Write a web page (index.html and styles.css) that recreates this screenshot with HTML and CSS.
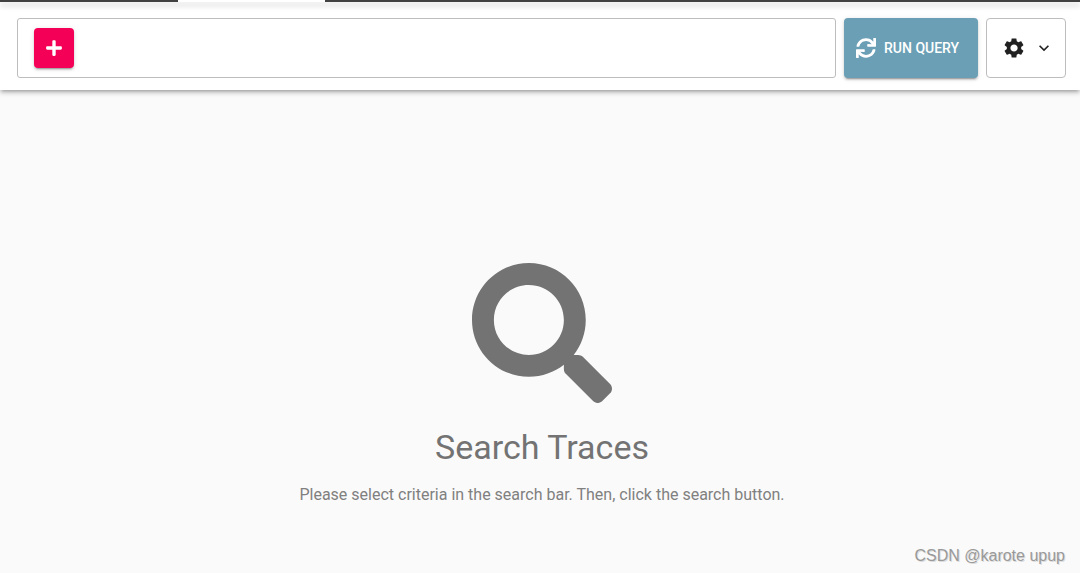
FILE: index.html
```
<!DOCTYPE html>
<html lang="en">

<head>
    <meta charset="utf-8">
    <title>Search Traces</title>
    <link rel="stylesheet" href="styles.css">
</head>

<body>
    <div class="tabStrip"><div class="activeTab"></div></div>
    <header class="toolbar">
        <div class="searchBar">
            <button class="addButton" aria-label="Add criterion">
                <svg width="16" height="18" viewBox="0 0 448 512"><path d="M416 208H272V64c0-17.67-14.33-32-32-32h-32c-17.67 0-32 14.33-32 32v144H32c-17.67 0-32 14.33-32 32v32c0 17.67 14.33 32 32 32h144v144c0 17.67 14.33 32 32 32h32c17.67 0 32-14.33 32-32V304h144c17.67 0 32-14.33 32-32v-32c0-17.67-14.33-32-32-32z"/></svg>
            </button>
        </div>
        <button class="runButton">
            <svg width="20" height="20" viewBox="0 0 512 512"><path d="M440.65 12.57l4 82.77A247.16 247.16 0 0 0 255.83 8C134.73 8 33.91 94.92 12.29 209.82A12 12 0 0 0 24.09 224h49.05a12 12 0 0 0 11.67-9.26 175.91 175.91 0 0 1 317-56.94l-101.46-4.86a12 12 0 0 0-12.57 12v47.41a12 12 0 0 0 12 12H500a12 12 0 0 0 12-12V12a12 12 0 0 0-12-12h-47.37a12 12 0 0 0-11.98 12.57zM255.83 432a175.61 175.61 0 0 1-146-77.8l101.8 4.87a12 12 0 0 0 12.57-12v-47.4a12 12 0 0 0-12-12H12a12 12 0 0 0-12 12V500a12 12 0 0 0 12 12h47.35a12 12 0 0 0 12-12.6l-4.15-82.57A247.17 247.17 0 0 0 255.83 504c121.11 0 221.93-86.92 243.55-201.82a12 12 0 0 0-11.8-14.18h-49.05a12 12 0 0 0-11.67 9.26A175.86 175.86 0 0 1 255.83 432z"/></svg>
            <span>RUN QUERY</span>
        </button>
        <button class="settingsButton" aria-label="Settings">
            <svg width="24" height="24" viewBox="0 0 24 24"><path d="M19.14 12.94c.04-.3.06-.61.06-.94 0-.32-.02-.64-.07-.94l2.03-1.58c.18-.14.23-.41.12-.61l-1.92-3.32c-.12-.22-.37-.29-.59-.22l-2.39.96c-.5-.38-1.03-.7-1.62-.94l-.36-2.54c-.04-.24-.24-.41-.48-.41h-3.84c-.24 0-.43.17-.47.41l-.36 2.54c-.59.24-1.13.57-1.62.94l-2.39-.96c-.22-.08-.47 0-.59.22L2.74 8.87c-.12.21-.08.47.12.61l2.03 1.58c-.05.3-.09.63-.09.94s.02.64.07.94l-2.03 1.58c-.18.14-.23.41-.12.61l1.92 3.32c.12.22.37.29.59.22l2.39-.96c.5.38 1.03.7 1.62.94l.36 2.54c.05.24.24.41.48.41h3.84c.24 0 .44-.17.47-.41l.36-2.54c.59-.24 1.13-.56 1.62-.94l2.39.96c.22.08.47 0 .59-.22l1.92-3.32c.12-.22.07-.47-.12-.61l-2.01-1.58zM12 15.6c-1.98 0-3.6-1.62-3.6-3.6s1.62-3.6 3.6-3.6 3.6 1.62 3.6 3.6-1.62 3.6-3.6 3.6z"/></svg>
            <svg width="20" height="20" viewBox="0 0 24 24"><path d="M7.41 8.59L12 13.17l4.59-4.58L18 10l-6 6-6-6 1.41-1.41z"/></svg>
        </button>
    </header>
    <main class="content">
        <svg width="140" height="140" viewBox="0 0 512 512"><path d="M505 442.7L405.3 343c-4.5-4.5-10.6-7-17-7H372c27.6-35.3 44-79.7 44-128C416 93.1 322.9 0 208 0S0 93.1 0 208s93.1 208 208 208c48.3 0 92.7-16.4 128-44v16.3c0 6.4 2.5 12.5 7 17l99.7 99.7c9.4 9.4 24.6 9.4 33.9 0l28.3-28.3c9.4-9.4 9.4-24.6.1-34zM208 336c-70.7 0-128-57.2-128-128 0-70.7 57.2-128 128-128 70.7 0 128 57.2 128 128 0 70.7-57.2 128-128 128z"/></svg>
        <h1>Search Traces</h1>
        <p>Please select criteria in the search bar. Then, click the search button.</p>
    </main>
    <footer class="watermark">CSDN @karote upup</footer>
</body>

</html>
```
FILE: styles.css
```
* {
    box-sizing: border-box;
}
body {
    display: flex;
    flex-direction: column;
    min-height: 100vh;
    margin: 0;
    background-color: #fafafa;
    font-family: Roboto, sans-serif;
}
svg {
    flex-shrink: 0;
    fill: currentColor;
}
button {
    display: flex;
    align-items: center;
    border: none;
    border-radius: 4px;
    font-family: inherit;
    cursor: pointer;
}
.tabStrip {
    position: relative;
    z-index: 1;
    height: 2px;
    padding-left: 178px;
    background-color: #424242;
    box-shadow: 0 2px 4px -1px rgba(0, 0, 0, 0.2), 0 4px 5px rgba(0, 0, 0, 0.14), 0 1px 10px rgba(0, 0, 0, 0.12);
}
.activeTab {
    width: 147px;
    height: 2px;
    background-color: #fff;
}
.toolbar {
    display: flex;
    gap: 8px;
    padding: 16px 14px 12px 17px;
    background-color: #fff;
    box-shadow: 0 3px 3px -2px rgba(0, 0, 0, 0.2), 0 3px 4px rgba(0, 0, 0, 0.14), 0 1px 8px rgba(0, 0, 0, 0.12);
}
.searchBar {
    display: flex;
    flex: 1;
    align-items: center;
    height: 60px;
    padding: 0 16px;
    border: 1px solid #bdbdbd;
    border-radius: 3px;
}
.addButton {
    justify-content: center;
    width: 40px;
    height: 40px;
    padding: 0;
    background-color: #f50057;
    color: #fff;
    box-shadow: 0 3px 1px -2px rgba(0, 0, 0, 0.2), 0 2px 2px rgba(0, 0, 0, 0.14), 0 1px 5px rgba(0, 0, 0, 0.12);
}
.runButton {
    gap: 8px;
    min-width: 134px;
    height: 60px;
    padding: 0 12px;
    background-color: #6b9fb5;
    color: #fff;
    font-size: 14px;
    font-weight: 500;
    box-shadow: 0 3px 1px -2px rgba(0, 0, 0, 0.2), 0 2px 2px rgba(0, 0, 0, 0.14), 0 1px 5px rgba(0, 0, 0, 0.12);
}
.settingsButton {
    gap: 8px;
    height: 60px;
    padding: 0 11px 0 15px;
    border: 1px solid #bdbdbd;
    background-color: #fff;
    color: #212121;
}
.content {
    display: flex;
    flex: 1;
    flex-direction: column;
    align-items: center;
    justify-content: center;
    padding: 136px 0 0 4px;
    color: #737373;
}
h1 {
    margin: 24px 0 16px;
    font-size: 34px;
    font-weight: 400;
    line-height: 40px;
}
p {
    margin: 0;
    color: #808080;
    font-size: 16px;
    line-height: 24px;
}
.watermark {
    padding: 0 15px 5px;
    color: #999;
    font: 16px/24px "Liberation Sans", sans-serif;
    text-align: right;
    text-shadow: 1px 1px 0 #ddd;
}
```
